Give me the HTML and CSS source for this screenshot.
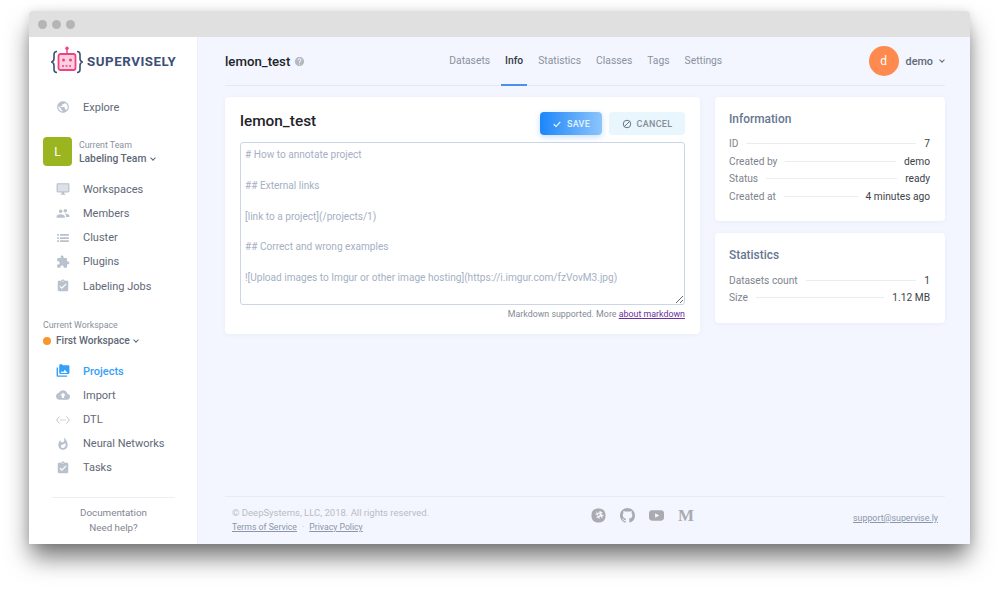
FILE: index.html
```html
<!DOCTYPE html>
<html lang="en">
<head>
    <meta charset="UTF-8">
    <meta name="viewport" content="width=device-width, initial-scale=1.0">
    <title>lemon_test - Supervisely</title>
    <link rel="stylesheet" href="styles.css">
</head>
<body>
<div class="window">
    <div class="titlebar">
        <span class="dot"></span><span class="dot"></span><span class="dot"></span>
    </div>
    <div class="app">

        <!-- sidebar -->
        <aside class="sidebar">
            <div class="logo">
                <svg class="logo-mark" width="32" height="32" viewBox="0 0 32 32">
                    <path d="M6 5.500c-2.500 0-3 1-3 3v4c0 2-1 3-2.300 3.500 1.300.5 2.300 1.500 2.300 3.500v4c0 2 .5 3 3 3M26 5.500c2.500 0 3 1 3 3v4c0 2 1 3 2.300 3.500-1.300.5-2.300 1.500-2.300 3.500v4c0 2-.5 3-3 3" fill="none" stroke="#3d4f75" stroke-width="1.600"/>
                    <path d="M16 3v5" stroke="#f2417f" stroke-width="1.400"/>
                    <circle cx="16" cy="2.200" r="1.700" fill="#f2417f"/>
                    <rect x="7.500" y="8" width="17" height="16" rx="2" fill="#fbd0e0" stroke="#f2417f" stroke-width="1.800"/>
                    <circle cx="12.500" cy="14" r="1.500" fill="#f2417f"/>
                    <circle cx="19.500" cy="14" r="1.500" fill="#f2417f"/>
                    <path d="M11 20h10" stroke="#f2417f" stroke-width="1.600" stroke-dasharray="2 1.500"/>
                </svg>
                <span class="logo-text">SUPERVISELY</span>
            </div>

            <a class="nav-item explore">
                <svg class="nav-icon" viewBox="0 0 24 24"><path d="M12 2C6.480 2 2 6.480 2 12s4.480 10 10 10 10-4.480 10-10S17.520 2 12 2zm-1 17.930c-3.950-.49-7-3.850-7-7.930 0-.62.08-1.210.21-1.790L9 15v1c0 1.100.9 2 2 2v1.930zm6.900-2.540c-.26-.81-1-1.390-1.900-1.390h-1v-3c0-.55-.45-1-1-1H8v-2h2c.55 0 1-.45 1-1V7h2c1.100 0 2-.9 2-2v-.41c2.930 1.190 5 4.060 5 7.410 0 2.080-.8 3.970-2.100 5.390z"/></svg>
                Explore
            </a>

            <div class="team">
                <div class="team-avatar">L</div>
                <div>
                    <div class="team-label">Current Team</div>
                    <div class="team-name">Labeling Team <span class="chevron"></span></div>
                </div>
            </div>

            <nav class="nav-group">
                <a class="nav-item">
                    <svg class="nav-icon" viewBox="0 0 24 24"><path d="M21 2H3c-1.100 0-2 .9-2 2v12c0 1.100.9 2 2 2h7v2H8v2h8v-2h-2v-2h7c1.100 0 2-.9 2-2V4c0-1.100-.9-2-2-2z"/><rect class="icon-inner" x="3" y="4" width="18" height="12"/></svg>
                    Workspaces
                </a>
                <a class="nav-item">
                    <svg class="nav-icon" viewBox="0 0 24 24"><path d="M16 11c1.660 0 2.990-1.340 2.990-3S17.660 5 16 5c-1.660 0-3 1.340-3 3s1.340 3 3 3zm-8 1c1.660 0 2.990-1.340 2.990-3S9.660 6 8 6C6.340 6 5 7.340 5 9s1.340 3 3 3zm0 2c-2.330 0-7 1.170-7 3.500V20h14v-2.500c0-2.330-4.670-3.500-7-3.500zm8-1c-.29 0-.62.02-.97.05 1.160.84 1.970 1.970 1.970 3.450V19h6v-2.500c0-2.330-4.670-3.500-7-3.500z"/></svg>
                    Members
                </a>
                <a class="nav-item">
                    <svg class="nav-icon" viewBox="0 0 24 24"><path d="M2 5h3v3H2zM7 5h15v3H7zM2 10.500h3v3H2zM7 10.500h15v3H7zM2 16h3v3H2zM7 16h15v3H7z"/></svg>
                    Cluster
                </a>
                <a class="nav-item">
                    <svg class="nav-icon" viewBox="0 0 24 24"><path d="M20.500 11H19V7c0-1.100-.9-2-2-2h-4V3.500C13 2.120 11.880 1 10.500 1S8 2.120 8 3.500V5H4c-1.100 0-1.990.9-1.990 2v3.800H3.500c1.490 0 2.700 1.210 2.700 2.700s-1.210 2.700-2.700 2.700H2V20c0 1.100.9 2 2 2h3.800v-1.500c0-1.490 1.210-2.700 2.700-2.700 1.490 0 2.700 1.210 2.700 2.700V22H17c1.100 0 2-.9 2-2v-4h1.500c1.380 0 2.500-1.120 2.500-2.500S21.880 11 20.500 11z"/></svg>
                    Plugins
                </a>
                <a class="nav-item">
                    <svg class="nav-icon" viewBox="0 0 24 24"><path d="M19 3h-4.180C14.400 1.840 13.300 1 12 1c-1.300 0-2.400.84-2.820 2H5c-1.100 0-2 .9-2 2v14c0 1.100.9 2 2 2h14c1.100 0 2-.9 2-2V5c0-1.100-.9-2-2-2zm-7 0c.55 0 1 .45 1 1s-.45 1-1 1-1-.45-1-1 .45-1 1-1zm-2 14l-4-4 1.410-1.410L10 14.170l6.590-6.590L18 9l-8 8z"/></svg>
                    Labeling Jobs
                </a>
            </nav>

            <div class="workspace">
                <div class="workspace-label">Current Workspace</div>
                <div class="workspace-name"><span class="status-dot"></span>First Workspace <span class="chevron"></span></div>
            </div>

            <nav class="nav-group">
                <a class="nav-item active">
                    <svg class="nav-icon" viewBox="0 0 24 24"><path d="M23 15V4c0-1.100-.9-2-2-2H12L10 .5H7.500C6.400.5 5.500 1.400 5.500 2.500V15c0 1.100.9 2 2 2H21c1.100 0 2-.9 2-2zm-13-3l2.030 2.200L15 10l5 5.500H8zM1 6v14c0 1.100.9 2 2 2h16v-2.500H3.500V6H1z"/></svg>
                    Projects
                </a>
                <a class="nav-item">
                    <svg class="nav-icon" viewBox="0 0 24 24"><path d="M19.350 10.040C18.670 6.590 15.640 4 12 4 9.110 4 6.600 5.640 5.350 8.040 2.340 8.360 0 10.910 0 14c0 3.310 2.690 6 6 6h13c2.760 0 5-2.240 5-5 0-2.640-2.050-4.780-4.650-4.960zM14 13v4h-4v-4H7l5-5 5 5h-3z"/></svg>
                    Import
                </a>
                <a class="nav-item">
                    <svg class="nav-icon" viewBox="0 0 24 24"><path d="M6 6l-5 6 5 6M18 6l5 6-5 6" fill="none" stroke="#b9c1cc" stroke-width="1.600"/><circle cx="8.500" cy="12" r="1.100"/><circle cx="12" cy="12" r="1.100"/><circle cx="15.500" cy="12" r="1.100"/></svg>
                    DTL
                </a>
                <a class="nav-item">
                    <svg class="nav-icon" viewBox="0 0 24 24"><path d="M13.500.67s.74 2.650.74 4.800c0 2.060-1.350 3.730-3.410 3.730-2.070 0-3.630-1.670-3.630-3.730l.03-.36C5.210 7.510 4 10.620 4 14c0 4.420 3.580 8 8 8s8-3.580 8-8C20 8.610 17.410 3.800 13.500.67zM11.710 19c-1.780 0-3.220-1.400-3.220-3.140 0-1.620 1.050-2.760 2.810-3.120 1.770-.36 3.600-1.210 4.620-2.580.39 1.290.59 2.650.59 4.040 0 2.650-2.150 4.800-4.800 4.800z"/></svg>
                    Neural Networks
                </a>
                <a class="nav-item">
                    <svg class="nav-icon" viewBox="0 0 24 24"><path d="M19 3h-4.180C14.400 1.840 13.300 1 12 1c-1.300 0-2.400.84-2.820 2H5c-1.100 0-2 .9-2 2v14c0 1.100.9 2 2 2h14c1.100 0 2-.9 2-2V5c0-1.100-.9-2-2-2zm-7 0c.55 0 1 .45 1 1s-.45 1-1 1-1-.45-1-1 .45-1 1-1zm-2 14l-4-4 1.410-1.410L10 14.170l6.590-6.590L18 9l-8 8z"/></svg>
                    Tasks
                </a>
            </nav>

            <div class="side-help">
                <a>Documentation</a>
                <a>Need help?</a>
            </div>
        </aside>

        <!-- main column -->
        <main class="main">
            <header class="header">
                <h1 class="project-title">lemon_test</h1>
                <svg class="help-icon" viewBox="0 0 24 24"><path d="M12 2C6.480 2 2 6.480 2 12s4.480 10 10 10 10-4.480 10-10S17.520 2 12 2zm1 17h-2v-2h2v2zm2.070-7.750l-.9.920C13.450 12.900 13 13.500 13 15h-2v-.5c0-1.100.45-2.100 1.170-2.830l1.240-1.260c.37-.36.59-.86.59-1.410 0-1.100-.9-2-2-2s-2 .9-2 2H8c0-2.210 1.790-4 4-4s4 1.790 4 4c0 .88-.36 1.680-.93 2.250z"/></svg>
                <nav class="tabs">
                    <a class="tab">Datasets</a>
                    <a class="tab active">Info</a>
                    <a class="tab">Statistics</a>
                    <a class="tab">Classes</a>
                    <a class="tab">Tags</a>
                    <a class="tab">Settings</a>
                </nav>
                <div class="user">
                    <div class="user-avatar">d</div>
                    <span class="user-name">demo</span>
                    <span class="chevron"></span>
                </div>
            </header>

            <div class="content">
                <section class="card editor">
                    <div class="editor-head">
                        <h2 class="editor-title">lemon_test</h2>
                        <button class="btn btn-save">
                            <svg class="btn-icon" viewBox="0 0 24 24"><path d="M4 12.500l5.500 5.500L20 7" fill="none" stroke="#fff" stroke-width="2.600"/></svg>
                            SAVE
                        </button>
                        <button class="btn btn-cancel">
                            <svg class="btn-icon" viewBox="0 0 24 24"><circle cx="12" cy="12" r="9" fill="none" stroke="#6b7280" stroke-width="2.400"/><path d="M6 18L18 6" stroke="#6b7280" stroke-width="2.400"/></svg>
                            CANCEL
                        </button>
                    </div>
                    <textarea class="editor-text" spellcheck="false"># How to annotate project

## External links

[link to a project](/projects/1)

## Correct and wrong examples

![Upload images to Imgur or other image hosting](https://i.imgur.com/fzVovM3.jpg)</textarea>
                    <p class="editor-note">Markdown supported. More <a class="note-link">about markdown</a></p>
                </section>

                <div class="side-cards">
                    <section class="card info-card">
                        <h3 class="info-title">Information</h3>
                        <div class="info-row"><span class="info-key">ID</span><span class="info-line"></span><span class="info-val">7</span></div>
                        <div class="info-row"><span class="info-key">Created by</span><span class="info-line"></span><span class="info-val">demo</span></div>
                        <div class="info-row"><span class="info-key">Status</span><span class="info-line"></span><span class="info-val">ready</span></div>
                        <div class="info-row"><span class="info-key">Created at</span><span class="info-line"></span><span class="info-val">4 minutes ago</span></div>
                    </section>
                    <section class="card info-card">
                        <h3 class="info-title">Statistics</h3>
                        <div class="info-row"><span class="info-key">Datasets count</span><span class="info-line"></span><span class="info-val">1</span></div>
                        <div class="info-row"><span class="info-key">Size</span><span class="info-line"></span><span class="info-val">1.12 MB</span></div>
                    </section>
                </div>
            </div>

            <footer class="footer">
                <div class="footer-left">
                    <div class="copyright">© DeepSystems, LLC, 2018. All rights reserved.</div>
                    <div class="footer-links"><a>Terms of Service</a><span class="sep">·</span><a>Privacy Policy</a></div>
                </div>
                <div class="socials">
                    <svg class="social" viewBox="0 0 16 16"><path fill-rule="evenodd" d="M8 .5C3 .5.500 3 .500 8S3 15.500 8 15.500 15.500 13 15.500 8 13 .5 8 .5zM6.200 3.500l.6 1.900 1.800-.6.7 0-.5-1.500 1.300-.4.500 1.500 1.400-.5.400 1.300-1.400.5.600 1.700 1.400-.5.400 1.300-1.400.5.500 1.500-1.300.4-.5-1.500-1.800.6.500 1.500-1.300.4-.5-1.500-1.400.5-.4-1.300 1.400-.5-.6-1.700-1.400.5-.4-1.300 1.400-.5-.5-1.500zM7.100 6.600l.6 1.800 1.800-.6-.6-1.800z"/></svg>
                    <svg class="social" viewBox="0 0 16 16"><path d="M8 0C3.580 0 0 3.580 0 8c0 3.540 2.290 6.530 5.470 7.590.4.070.55-.17.55-.38 0-.19-.01-.82-.01-1.490-2.010.37-2.530-.49-2.690-.94-.09-.23-.48-.94-.82-1.130-.28-.15-.68-.52-.01-.53.63-.01 1.080.58 1.230.82.720 1.210 1.870.87 2.330.66.070-.52.280-.87.510-1.070-1.780-.2-3.640-.89-3.640-3.950 0-.87.310-1.590.820-2.150-.08-.2-.36-1.020.080-2.120 0 0 .67-.21 2.200.82.640-.18 1.320-.27 2-.27.680 0 1.360.09 2 .27 1.530-1.040 2.200-.82 2.200-.82.440 1.100.160 1.920.080 2.120.510.560.820 1.270.820 2.150 0 3.070-1.870 3.750-3.650 3.950.290.25.540.73.540 1.480 0 1.070-.01 1.930-.01 2.200 0 .21.150.46.550.38A8.013 8.013 0 0016 8c0-4.420-3.580-8-8-8z"/></svg>
                    <svg class="social" viewBox="0 0 16 16"><path fill-rule="evenodd" d="M3 2.500h10c1.700 0 3 1.300 3 3v5c0 1.700-1.300 3-3 3H3c-1.700 0-3-1.300-3-3v-5c0-1.700 1.300-3 3-3zM6.500 5.500v5L11 8z"/></svg>
                    <span class="medium">M</span>
                </div>
                <a class="support">support@supervise.ly</a>
            </footer>
        </main>
    </div>
</div>
</body>
</html>
```

FILE: styles.css
```css
* { box-sizing: border-box; }
html, body { height: 100%; }
body { margin: 0; background: #fff; padding: 11px 30px 52px 29px; overflow: hidden; font-family: Roboto, "Liberation Sans", sans-serif; color: #5f6877; }
a { color: inherit; }

.window { height: 533px; display: flex; flex-direction: column; border-radius: 4px 4px 0 0; box-shadow: 0 15px 25px -2px rgba(0, 0, 0, .55), 0 0 10px rgba(0, 0, 0, .1); }
.titlebar { height: 26px; flex: none; background: #e0e0e0; border-radius: 4px 4px 0 0; display: flex; align-items: center; gap: 5px; padding-left: 9px; }
.dot { width: 9px; height: 9px; border-radius: 50%; background: #b5b5b5; }
.app { flex: 1; display: flex; min-height: 0; background: #f3f6fe; }

/* sidebar */
.sidebar { width: 169px; flex: none; background: #fff; display: flex; flex-direction: column; border-right: 1px solid #edf0f7; }
.logo { height: 58px; flex: none; display: flex; align-items: center; padding: 0 0 9px 22px; gap: 4px; }
.logo-mark { flex: none; }
.logo-text { font-size: 13.300px; font-weight: 700; letter-spacing: .55px; color: #3d4f75; }
.nav-group { display: flex; flex-direction: column; }
.nav-item { height: 24.200px; display: flex; align-items: center; gap: 13px; padding-left: 27px; font-size: 11px; color: #5f6877; }
.nav-item.active { color: #35a0fa; font-weight: 500; }
.nav-item.active .nav-icon { fill: #35a0fa; }
.nav-icon { width: 14px; height: 14px; flex: none; fill: #b9c1cc; }
.icon-inner { fill: #dde1e7; }
.team { display: flex; align-items: center; gap: 7px; padding-left: 14px; margin: 18px 0 11px; }
.team-avatar { width: 29px; height: 29px; border-radius: 4px; background: #9ab51f; color: #fff; font-size: 12px; display: flex; align-items: center; justify-content: center; }
.team-label { font-size: 8.800px; line-height: 12px; margin-top: 1px; color: #8a919c; }
.team-name { font-size: 10.300px; line-height: 15px; font-weight: 500; color: #5f6877; }
.chevron { display: inline-block; width: 4px; height: 4px; margin: 0 2px 2px 2px; border-right: 1px solid #5f6877; border-bottom: 1px solid #5f6877; transform: rotate(45deg); }
.workspace { padding-left: 14px; margin: 21px 0 10px; }
.workspace-label { font-size: 8.800px; line-height: 13px; color: #8a919c; }
.workspace-name { font-size: 10.200px; line-height: 17px; font-weight: 500; color: #5f6877; display: flex; align-items: center; }
.workspace-name .chevron { margin-left: 4px; }
.status-dot { width: 8px; height: 8px; border-radius: 50%; background: #f7982f; margin-right: 5px; }
.side-help { margin: auto 22px 0 23px; border-top: 1px solid #eceef2; padding: 7px 0 9px; display: flex; flex-direction: column; align-items: center; font-size: 9.800px; line-height: 15px; color: #7f8691; }

/* header */
.main { flex: 1; min-width: 0; display: flex; flex-direction: column; padding: 0 25px 0 27px; }
.header { height: 49px; flex: none; display: flex; align-items: center; border-bottom: 1px solid #e3e8f2; }
.project-title { margin: 0; font-size: 13.200px; font-weight: 500; color: #20242b; }
.help-icon { width: 11px; height: 11px; margin-left: 4px; fill: #b4b9c1; }
.tabs { display: flex; gap: 7px; margin-left: 140px; height: 100%; }
.tab { padding: 0 4px; font-size: 10.300px; line-height: 47px; height: 49px; color: #8a919f; }
.tab.active { color: #333b47; font-weight: 500; border-bottom: 2px solid #4a90f0; }
.user { margin-left: auto; display: flex; align-items: center; }
.user-avatar { width: 30px; height: 30px; border-radius: 50%; background: #ff8a50; color: #fff; font-size: 12px; display: flex; align-items: center; justify-content: center; }
.user-name { font-size: 10.800px; font-weight: 500; margin: 0 7px; color: #5f6877; }
.user .chevron { margin: 0 1px 2px 0; }

/* cards */
.content { display: flex; gap: 15px; padding-top: 11px; align-items: flex-start; }
.card { background: #fff; border-radius: 4px; box-shadow: 0 1px 4px rgba(120, 140, 190, .08); }
.editor { width: 475px; height: 237px; padding: 15px 15px 0; }
.editor-head { display: flex; align-items: center; height: 23px; margin-bottom: 7px; }
.editor-title { margin: 0 auto 6px 0; font-size: 15.400px; font-weight: 500; color: #1f232a; }
.btn { height: 23px; border: 0; border-radius: 4px; font-family: Roboto, sans-serif; font-size: 9px; font-weight: 500; letter-spacing: .3px; display: flex; align-items: center; justify-content: center; gap: 5px; padding: 0; }
.btn-icon { width: 10px; height: 10px; flex: none; }
.btn-save { width: 62px; margin-right: 7px; color: #e6f3ff; background: linear-gradient(90deg, #1c86fa, #8dc5fb); box-shadow: 0 2px 6px rgba(40, 130, 240, .25); }
.btn-cancel { width: 76px; color: #868c96; background: #e9f6fd; }
.editor-text { display: block; width: 445px; height: 163px; padding: 4px; border: 1px solid #cbd5e6; border-radius: 3px; outline: none; resize: both; font-family: Roboto, "Liberation Sans", sans-serif; font-size: 10.100px; line-height: 15.400px; color: #a5b0c4; background: #fff; overflow: hidden; }
.editor-note { margin: 3px 0 0; text-align: right; font-size: 8.850px; line-height: 13px; color: #858b95; }
.note-link { color: #6a32a0; text-decoration: underline; }

.side-cards { width: 230px; display: flex; flex-direction: column; gap: 12px; }
.info-card { padding: 14px 15px 16px 14px; }
.info-title { margin: 0 0 8px; font-size: 11.900px; line-height: 16px; font-weight: 500; color: #667690; }
.info-row { display: flex; align-items: center; height: 17.600px; font-size: 10.200px; }
.info-key { color: #7d838d; }
.info-val { color: #3c4149; }
.info-line { flex: 1; height: 1px; background: #e9ecf1; margin: 0 8px; }

/* footer */
.footer { margin-top: auto; height: 48px; flex: none; border-top: 1px solid #e6ebf5; padding: 9px 7px 0; display: flex; align-items: flex-start; }
.footer-left { width: 359px; font-size: 8.700px; line-height: 14px; }
.copyright { color: #b8bcc6; font-size: 9.500px; }
.footer-links { color: #8b96ab; }
.footer-links a, .support { text-decoration: underline; }
.sep { margin: 0 5px; color: #b8bcc6; }
.socials { display: flex; align-items: center; gap: 14px; height: 18px; }
.social { width: 15px; height: 15px; fill: #a9abb0; }
.medium { font-family: "Liberation Serif", serif; font-size: 17px; font-weight: 700; line-height: 15px; color: #a9abb0; }
.support { margin-left: auto; margin-top: 5px; font-size: 8.850px; line-height: 14px; color: #8b96ab; }
```
